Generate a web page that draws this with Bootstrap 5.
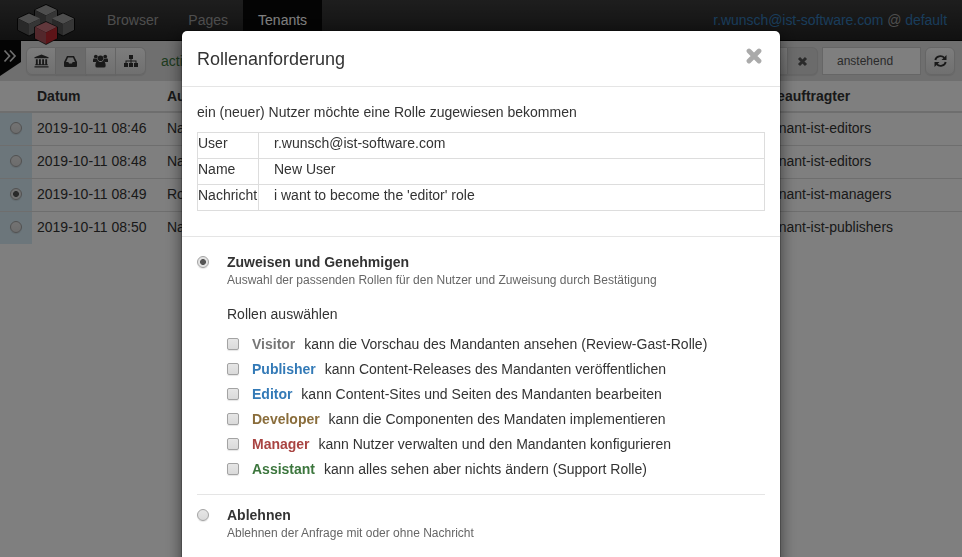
<!DOCTYPE html>
<html lang="de">
<head>
<meta charset="utf-8">
<meta name="viewport" content="width=device-width, initial-scale=1">
<title>Tenants</title>
<link href="https://cdn.jsdelivr.net/npm/bootstrap@5.3.0/dist/css/bootstrap.min.css" rel="stylesheet">
<style>
body{font:14px/20px "Liberation Sans",Arial,sans-serif;color:#333;background:#fff;height:557px;overflow:hidden}
.topbar{height:41px;background:linear-gradient(#3c3c3c,#222);border-bottom:1px solid #080808}
.topbar .nav-link{padding:10px 15px;height:40px;color:#9d9d9d;line-height:20px}
.topbar .nav-link.active{color:#fff;background:#080808}
.logo{width:92px;height:40px;flex:none}
.account{color:#9d9d9d;padding-right:15px;letter-spacing:-.05px}
.account a{color:#337ab7;text-decoration:none}
.tools{height:40px;background:#dedede}
.tab-toggle{width:26px;align-self:flex-start}
.tool{width:30px;height:28px;padding:0;border:1px solid #ccc;border-radius:0;background:linear-gradient(#fafafa,#e0e0e0);color:#333;display:flex;align-items:center;justify-content:center;box-shadow:0 1px 1px rgba(0,0,0,.08)}
.tool.active,.tool.active:hover{background:#d6d6d6;border-color:#ccc;color:#333}
.btn-group>.tool.btn:not(:first-child){margin-left:0;border-left:0}
.action-link{color:#3c763d;margin-left:15px}
.filter{width:99px;height:28px;border:1px solid #ccc;background:#fff;font-size:12px;color:#555;line-height:27px;padding-left:14px}
.reload{margin:0 7px 0 4px}
.jobs{table-layout:fixed;margin:0;color:#333}
.jobs th,.jobs td{height:33px;padding:5px 5px 7px;border:0;border-bottom:1px solid #ddd;line-height:20px;white-space:nowrap;color:#333}
.jobs th{height:31px;padding:4px 5px 5px;border-bottom:2px solid #ddd}
.jobs tbody tr:last-child td{border-bottom:0;height:32px}
.jobs td.pick{background:#d9edf7;box-shadow:none;padding:9px 0 0 10px}
.dot,.box{appearance:none;flex:none;display:block;margin:0;width:12px;height:12px;border:1px solid #a3a3a3;background:linear-gradient(#e6e6e6,#dadada);box-shadow:0 1px 1px rgba(0,0,0,.1)}
.dot{border-radius:50%}
.box{border-radius:2px}
.dot:checked{background:radial-gradient(circle,#555 0 2.6px,#e3e3e3 3.3px)}
.modal-backdrop{--bs-backdrop-opacity:.5}
.modal-dialog{width:600px;max-width:600px;margin:30px auto}
.modal-content{border:1px solid rgba(0,0,0,.2);border-radius:6px;box-shadow:0 5px 15px rgba(0,0,0,.5);color:#333}
.modal-header{height:56px;padding:0 18px 0 15px;border-bottom:1px solid #e5e5e5}
.modal-title{font-size:18px;line-height:26px;font-weight:400}
.dismiss{border:0;background:none;padding:0;line-height:0;margin-bottom:5px}
.section{padding:15px 15px 25px;border-bottom:1px solid #e5e5e5}
.facts{width:568px;margin:10px 0 0;border-collapse:collapse}
.facts th,.facts td{border:1px solid #ddd;height:26px;padding:0 0 5px;line-height:20px;font-weight:400}
.facts th{width:61px}
.facts td{padding-left:15px}
.choices{padding:5px 15px 50px}
.choice{gap:18px;padding:10px 0 13px}
.choice .dot{margin-top:4px}
.choice+.choice{border-top:1px solid #e5e5e5}
.pick-title{margin:16px 0 7px}
.hint{font-size:12px;line-height:16px;color:#666}
.role{height:25px;gap:13px}
.role b{margin-right:5px}
.r-visitor{color:#777}
.r-site{color:#337ab7}
.r-developer{color:#8a6d3b}
.r-manager{color:#a94442}
.r-assistant{color:#3c763d}
</style>
<script src="https://cdn.jsdelivr.net/npm/bootstrap@5.3.0/dist/js/bootstrap.bundle.min.js"></script>
</head>
<body>
<nav class="topbar d-flex">
  <div class="logo position-relative z-1">
    <svg width="92" height="50" viewBox="0 0 92 50">
      <g fill="#111" stroke="#0a0a0a" stroke-width="1">
        <path d="M46 4.500l11.500 5.500v12L46 28l-11.500-6V10z"/>
        <path d="M29 13l11.500 5.500V30L29 36l-11.500-6V18.500z"/>
        <path d="M63 13l11.500 5.500V30L63 36l-11.500-6V18.500z"/>
      </g>
      <path fill="#9c9c9c" d="M46 5l11 5-11 5.500L35 10z"/><path fill="#525252" d="M35 10l11 5.500V28l-11-6z"/><path fill="#6c6c6c" d="M57 10l-11 5.500V28l11-6z"/>
      <path fill="#9c9c9c" d="M29 13.500l11 5-11 5.500-11-5.500z"/><path fill="#525252" d="M18 18.500L29 24v11.500L18 30z"/><path fill="#6c6c6c" d="M40 18.500L29 24v11.500L40 30z"/>
      <path fill="#9c9c9c" d="M63 13.500l11 5-11 5.500-11-5.500z"/><path fill="#525252" d="M52 18.500L63 24v11.500L52 30z"/><path fill="#6c6c6c" d="M74 18.500L63 24v11.500L74 30z"/>
      <path fill="#111" stroke="#0a0a0a" stroke-width=".6" d="M46 21.500l11.500 5.500v11.500L46 44.500l-11.500-6V27z"/>
      <path fill="#c27078" d="M46 22l11 5-11 5.500L35 27z"/><path fill="#a65058" d="M35 27l11 5.500V44l-11-5.500z"/><path fill="#ba2830" d="M57 27l-11 5.500V44l11-5.500z"/>
    </svg>
  </div>
  <div class="nav">
    <a class="nav-link" href="#">Browser</a>
    <a class="nav-link" href="#">Pages</a>
    <a class="nav-link active" href="#">Tenants</a>
  </div>
  <div class="account ms-auto align-self-center"><a href="#">r.wunsch@ist-software.com</a> @ <a href="#">default</a></div>
</nav>
<div class="tools d-flex align-items-center">
  <svg class="tab-toggle" width="26" height="36" viewBox="0 0 26 36"><path d="M0 0h21v21L0 35z" fill="#080808"/><path d="M4.500 9.500l5 5.500-5 5.500M10 9.500l5 5.500-5 5.500" fill="none" stroke="#ddd" stroke-width="1.700"/></svg>
  <div class="btn-group">
    <button class="tool btn rounded-start" aria-label="Tenants"><svg width="15" height="14" viewBox="0 0 16 14" fill="currentColor"><path d="M8 0l7.500 3v1H.5V3zM2 5h2v5.500h1.300V5h2v5.500h1.400V5h2v5.500H12V5h2v5.500h.7v1H1.300v-1H2zM.5 12.500h15V14H.5z"/></svg></button>
    <button class="tool btn active" aria-label="Inbox"><svg width="13" height="11" viewBox="0 0 13 11" fill="currentColor" fill-rule="evenodd"><path d="M3 0h7l3 6v4q0 1-1 1H1q-1 0-1-1V6zM4 1.600L2 6h2.300l.8 1.500h2.800L8.700 6H11L9 1.600z"/></svg></button>
    <button class="tool btn" aria-label="Users"><svg width="15" height="14" viewBox="0 0 16 14" fill="currentColor"><circle cx="3" cy="2.200" r="2"/><circle cx="13" cy="2.200" r="2"/><circle cx="8" cy="4" r="3"/><path d="M0 8V6q0-2 1.500-1.800 1.500.8 3 .2 0 1.600 1 2.600Q4 7 3.200 8H0zM16 8V6q0-2-1.500-1.800-1.500.8-3 .2 0 1.600-1 2.600 1.500 0 2.300 1zM2.500 12q0-5 3-5Q8 9 10.500 7q3 0 3 5 0 2-2 2h-7q-2 0-2-2z"/></svg></button>
    <button class="tool btn rounded-end" aria-label="Groups"><svg width="14" height="12" viewBox="0 0 14 12" fill="currentColor"><path d="M5 0h4v4H7.500v1.500H12.500V8H14v4h-4V8h1.500V6.500h-4V8H9v4H5V8h1.500V6.500h-4V8H4v4H0V8h1.500V5.500h5V4H5z"/></svg></button>
  </div>
  <span class="action-link">actions</span>
  <div class="btn-group ms-auto me-1">
    <button class="tool btn rounded-start" aria-label="Search"></button>
    <button class="tool btn active rounded-end" aria-label="Reset"><svg width="11" height="11" viewBox="0 0 11 11"><path d="M2 2l7 7M9 2L2 9" stroke="#555" stroke-width="3"/></svg></button>
  </div>
  <div class="filter">anstehend</div>
  <button class="tool btn rounded reload" aria-label="Reload"><svg width="13" height="12" viewBox="0 0 13 12"><path d="M1.300 5A5.200 4.800 0 0110.300 2.800M11.700 7A5.200 4.800 0 012.700 9.200" fill="none" stroke="#333" stroke-width="1.900"/><path fill="#333" d="M12.500 0v5h-5zM.5 12V7h5z"/></svg></button>
</div>
<table class="jobs table">
  <colgroup><col width="32"><col width="130"><col width="600"><col></colgroup>
  <thead><tr><th></th><th>Datum</th><th>Aufgabe</th><th>Beauftragter</th></tr></thead>
  <tbody>
    <tr><td class="pick"><input class="dot" type="radio" name="job"></td><td>2019-10-11 08:46</td><td>Nachricht</td><td>tenant-ist-editors</td></tr>
    <tr><td class="pick"><input class="dot" type="radio" name="job"></td><td>2019-10-11 08:48</td><td>Nachricht</td><td>tenant-ist-editors</td></tr>
    <tr><td class="pick"><input class="dot" type="radio" name="job" checked></td><td>2019-10-11 08:49</td><td>Rollenanforderung</td><td>tenant-ist-managers</td></tr>
    <tr><td class="pick"><input class="dot" type="radio" name="job"></td><td>2019-10-11 08:50</td><td>Nachricht</td><td>tenant-ist-publishers</td></tr>
  </tbody>
</table>

<div class="modal-backdrop show"></div>
<div class="modal d-block overflow-hidden" tabindex="-1">
  <div class="modal-dialog">
    <div class="modal-content">
      <div class="modal-header">
        <h4 class="modal-title">Rollenanforderung</h4>
        <button class="dismiss" aria-label="Close"><svg width="16" height="16" viewBox="0 0 16 16"><path d="M3 3l10 10M13 3L3 13" stroke="#aaa" stroke-width="4.800" stroke-linecap="round"/></svg></button>
      </div>
      <div class="section">
        <div>ein (neuer) Nutzer möchte eine Rolle zugewiesen bekommen</div>
        <table class="facts">
          <tr><th>User</th><td>r.wunsch@ist-software.com</td></tr>
          <tr><th>Name</th><td>New User</td></tr>
          <tr><th>Nachricht</th><td>i want to become the 'editor' role</td></tr>
        </table>
      </div>
      <div class="choices">
        <div class="choice d-flex align-items-start">
          <input class="dot" type="radio" name="decision" checked>
          <div>
            <div class="fw-bold">Zuweisen und Genehmigen</div>
            <div class="hint">Auswahl der passenden Rollen für den Nutzer und Zuweisung durch Bestätigung</div>
            <div class="pick-title">Rollen auswählen</div>
            <div class="role d-flex align-items-center"><input class="box" type="checkbox"><span><b class="r-visitor">Visitor</b> kann die Vorschau des Mandanten ansehen (Review-Gast-Rolle)</span></div>
            <div class="role d-flex align-items-center"><input class="box" type="checkbox"><span><b class="r-site">Publisher</b> kann Content-Releases des Mandanten veröffentlichen</span></div>
            <div class="role d-flex align-items-center"><input class="box" type="checkbox"><span><b class="r-site">Editor</b> kann Content-Sites und Seiten des Mandanten bearbeiten</span></div>
            <div class="role d-flex align-items-center"><input class="box" type="checkbox"><span><b class="r-developer">Developer</b> kann die Componenten des Mandaten implementieren</span></div>
            <div class="role d-flex align-items-center"><input class="box" type="checkbox"><span><b class="r-manager">Manager</b> kann Nutzer verwalten und den Mandanten konfigurieren</span></div>
            <div class="role d-flex align-items-center"><input class="box" type="checkbox"><span><b class="r-assistant">Assistant</b> kann alles sehen aber nichts ändern (Support Rolle)</span></div>
          </div>
        </div>
        <div class="choice d-flex align-items-start">
          <input class="dot" type="radio" name="decision">
          <div>
            <div class="fw-bold">Ablehnen</div>
            <div class="hint">Ablehnen der Anfrage mit oder ohne Nachricht</div>
          </div>
        </div>
      </div>
    </div>
  </div>
</div>
</body>
</html>
